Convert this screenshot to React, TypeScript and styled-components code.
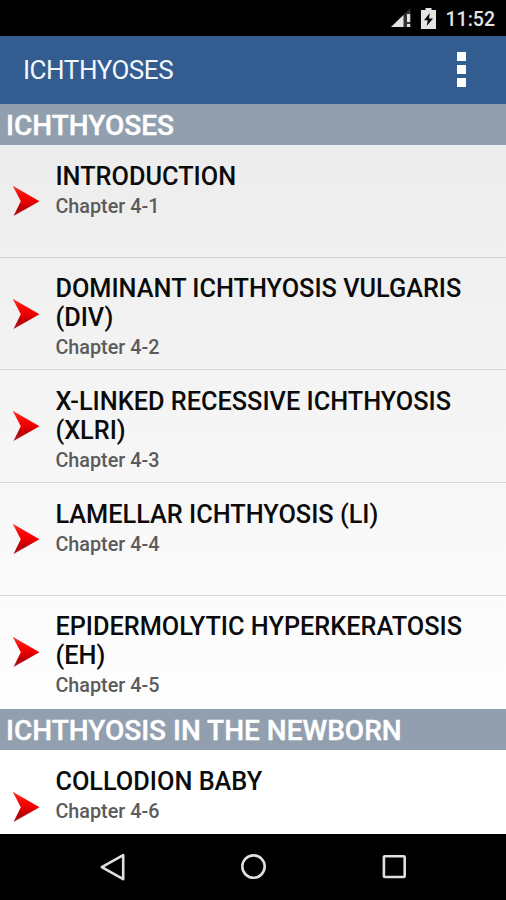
import React from "react";
import styled, { createGlobalStyle } from "styled-components";

const GlobalStyle = createGlobalStyle`
  html, body { margin: 0; padding: 0; background: #000; }
  * { box-sizing: border-box; }
`;

const Screen = styled.div`
  width: 506px;
  height: 900px;
  display: flex;
  flex-direction: column;
  overflow: hidden;
  background: #000;
  font-family: Roboto, "Liberation Sans", sans-serif;
`;

const StatusBar = styled.header`
  flex: none;
  height: 36px;
  display: flex;
  align-items: center;
  justify-content: flex-end;
  padding: 0 11px 0 0;
`;

const StatusIcon = styled.svg<{ $gap: number }>`
  display: block;
  flex: none;
  margin-right: ${(p) => p.$gap}px;
`;

const Clock = styled.span`
  font-size: 19.5px;
  font-weight: 500;
  line-height: 36px;
  padding-top: 3px;
  color: #e3e3e3;
`;

const AppBar = styled.div`
  flex: none;
  height: 67.5px;
  display: flex;
  align-items: center;
  justify-content: space-between;
  padding: 0 40px 0 23px;
  background: #335c91;
`;

const AppTitle = styled.h1`
  margin: 0;
  font-size: 26px;
  font-weight: 400;
  letter-spacing: -0.45px;
  line-height: 30px;
  padding-top: 1px;
  color: #f3f7fb;
`;

const MenuButton = styled.button`
  display: flex;
  flex-direction: column;
  gap: 4px;
  padding: 0;
  border: 0;
  background: none;
`;

const MenuDot = styled.span`
  width: 9px;
  height: 9px;
  background: #fff;
`;

const ChapterList = styled.main`
  flex: none;
  height: 730px;
  overflow: hidden;
  display: flex;
  flex-direction: column;
  background: linear-gradient(#ededed 0, #ededed 60px, #ffffff 640px);
`;

const SectionHeader = styled.h2`
  flex: none;
  margin: 0;
  height: 41.7px;
  padding: 1px 6px 0;
  background: #919fae;
  color: #fff;
  font-size: 28px;
  font-weight: 500;
  line-height: 42px;
  white-space: nowrap;
  -webkit-text-stroke: 0.4px #fff;
`;

const Row = styled.div<{ $last?: boolean }>`
  flex: none;
  height: ${(p) => (p.$last ? 113 : 112.6)}px;
  display: flex;
  border-bottom: ${(p) => (p.$last ? "0" : "1px solid #d6d6d6")};
`;

const ArrowCell = styled.div`
  width: 55.4px;
  flex: none;
  display: flex;
  align-items: center;
  padding-left: 12px;
`;

const RowText = styled.div`
  flex: 1;
  padding-top: 17.6px;
`;

const RowTitle = styled.div`
  font-size: 25.3px;
  font-weight: 500;
  line-height: 28.7px;
  color: #0b0b0b;
  white-space: pre-line;
`;

const RowSub = styled.div`
  margin-top: 3.7px;
  font-size: 19.8px;
  font-weight: 500;
  line-height: 24px;
  color: #5b5b5b;
`;

const NavBar = styled.nav`
  flex: none;
  height: 66.5px;
  display: flex;
  justify-content: center;
  align-items: center;
  gap: 112.5px;
  background: #000;
`;

const NavIcon = styled.svg`
  display: block;
  width: 28px;
  height: 28px;
`;

const Arrow = () => (
  <svg width="28" height="32" viewBox="0 0 28 32">
    <defs>
      <linearGradient id="red" x1="0" y1="0" x2="0" y2="1">
        <stop offset="0" stopColor="#f23a35" />
        <stop offset="0.3" stopColor="#ff0505" />
        <stop offset="0.5" stopColor="#ee0000" />
        <stop offset="0.75" stopColor="#b80008" />
        <stop offset="1" stopColor="#a82028" />
      </linearGradient>
    </defs>
    <path d="M.7 .8 27.5 16.2 1.5 31 8.8 16.2Z" fill="url(#red)" />
  </svg>
);

type Chapter = { title: string; sub: string };
const sections: { name: string; chapters: Chapter[] }[] = [
  {
    name: "ICHTHYOSES",
    chapters: [
      { title: "INTRODUCTION", sub: "Chapter 4-1" },
      { title: "DOMINANT ICHTHYOSIS VULGARIS\n(DIV)", sub: "Chapter 4-2" },
      { title: "X-LINKED RECESSIVE ICHTHYOSIS\n(XLRI)", sub: "Chapter 4-3" },
      { title: "LAMELLAR ICHTHYOSIS (LI)", sub: "Chapter 4-4" },
      { title: "EPIDERMOLYTIC HYPERKERATOSIS\n(EH)", sub: "Chapter 4-5" },
    ],
  },
  {
    name: "ICHTHYOSIS IN THE NEWBORN",
    chapters: [{ title: "COLLODION BABY", sub: "Chapter 4-6" }],
  },
];

export default function App() {
  return (
    <Screen>
      <GlobalStyle />
      <StatusBar>
        <StatusIcon $gap={9} width="22" height="20" viewBox="0 0 22 20">
          <path d="M20.5 0V19H1Z" fill="#333" />
          <path d="M13.5 7V19H1Z" fill="#e3e3e3" />
          <path d="M17 6h3.2v8H17zM17 16h3.2v3H17z" fill="#e3e3e3" />
        </StatusIcon>
        <StatusIcon $gap={10} width="15" height="21" viewBox="0 0 15 21">
          <path d="M4.5 0h6v2H15v19H0V2h4.5Z" fill="#e3e3e3" />
          <path d="M8.8 5 3 12.2h3.8L5.7 18 12 10.4H8Z" fill="#000" />
        </StatusIcon>
        <Clock>11:52</Clock>
      </StatusBar>
      <AppBar>
        <AppTitle>ICHTHYOSES</AppTitle>
        <MenuButton aria-label="More options">
          <MenuDot />
          <MenuDot />
          <MenuDot />
        </MenuButton>
      </AppBar>
      <ChapterList>
        {sections.map((s) => (
          <React.Fragment key={s.name}>
            <SectionHeader>{s.name}</SectionHeader>
            {s.chapters.map((c, i) => (
              <Row key={c.sub} $last={i === s.chapters.length - 1}>
                <ArrowCell>
                  <Arrow />
                </ArrowCell>
                <RowText>
                  <RowTitle>{c.title}</RowTitle>
                  <RowSub>{c.sub}</RowSub>
                </RowText>
              </Row>
            ))}
          </React.Fragment>
        ))}
      </ChapterList>
      <NavBar>
        <NavIcon viewBox="0 0 28 28" fill="none" stroke="#e0e0e0" strokeWidth="2.6" strokeLinejoin="round">
          <path d="M24.2 2.2v24L2.8 14.2Z" />
        </NavIcon>
        <NavIcon viewBox="0 0 28 28" fill="none" stroke="#e0e0e0" strokeWidth="2.6">
          <circle cx="14.5" cy="13.6" r="11.2" />
        </NavIcon>
        <NavIcon viewBox="0 0 28 28" fill="none" stroke="#e0e0e0" strokeWidth="2.6">
          <rect x="3.9" y="3.2" width="20.8" height="20.8" rx="1" />
        </NavIcon>
      </NavBar>
    </Screen>
  );
}
